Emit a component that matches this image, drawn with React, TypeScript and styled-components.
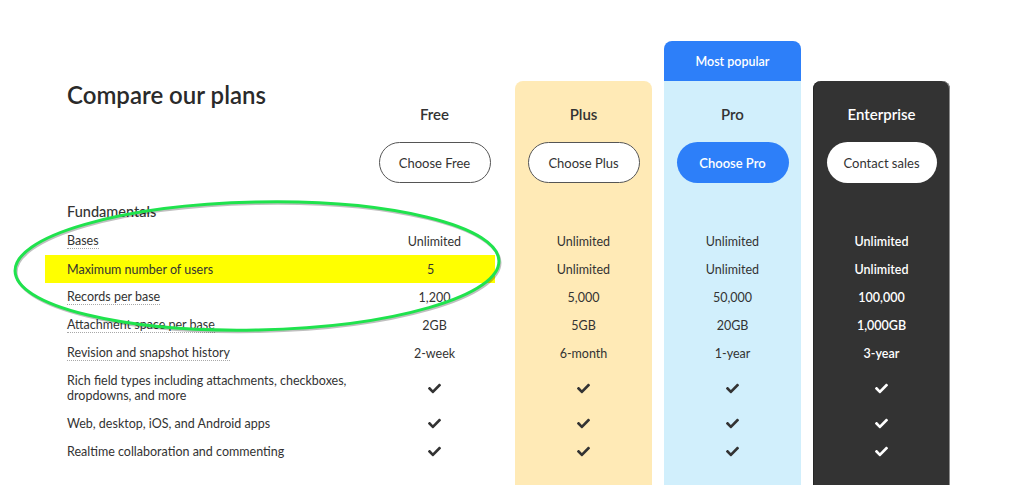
import React from 'react'
import styled, { createGlobalStyle, css } from 'styled-components'
import { FaCheck } from 'react-icons/fa'

type Variant = 'free' | 'plus' | 'pro' | 'enterprise'
type Value = string | boolean

interface Plan {
  name: string
  cta: string
  variant: Variant
  badge?: string
  values: Value[]
}

interface Feature {
  label: string
  tip?: boolean
  tall?: boolean
  highlight?: boolean
}

const features: Feature[] = [
  { label: 'Bases', tip: true },
  { label: 'Maximum number of users', highlight: true },
  { label: 'Records per base', tip: true },
  { label: 'Attachment space per base', tip: true },
  { label: 'Revision and snapshot history', tip: true },
  { label: 'Rich field types including attachments, checkboxes, dropdowns, and more', tall: true },
  { label: 'Web, desktop, iOS, and Android apps' },
  { label: 'Realtime collaboration and commenting' }
]

const plans: Plan[] = [
  {
    name: 'Free',
    cta: 'Choose Free',
    variant: 'free',
    values: ['Unlimited', '5', '1,200', '2GB', '2-week', true, true, true]
  },
  {
    name: 'Plus',
    cta: 'Choose Plus',
    variant: 'plus',
    values: ['Unlimited', 'Unlimited', '5,000', '5GB', '6-month', true, true, true]
  },
  {
    name: 'Pro',
    cta: 'Choose Pro',
    variant: 'pro',
    badge: 'Most popular',
    values: ['Unlimited', 'Unlimited', '50,000', '20GB', '1-year', true, true, true]
  },
  {
    name: 'Enterprise',
    cta: 'Contact sales',
    variant: 'enterprise',
    values: ['Unlimited', 'Unlimited', '100,000', '1,000GB', '3-year', true, true, true]
  }
]

const cardBg: Record<Variant, string> = {
  free: 'transparent',
  plus: '#ffeab6',
  pro: '#d1effc',
  enterprise: '#333333'
}

const GlobalStyle = createGlobalStyle`
  body {
    margin: 0;
    background: #ffffff;
    font-family: Lato, "Noto Sans", sans-serif;
    color: #333333;
  }
`

const Page = styled.div`
  position: relative;
  padding: 41px 0 0 67px;
`

const Table = styled.div`
  display: flex;
  align-items: flex-start;
`

const LabelColumn = styled.div`
  width: 299px;
  display: flex;
  flex-direction: column;
`

const PlanGrid = styled.div`
  display: flex;
  gap: 12px;
`

const PlanColumn = styled.div`
  width: 137px;
  display: flex;
  flex-direction: column;
`

const TabSlot = styled.div`
  height: 40px;
`

const Badge = styled.div`
  height: 40px;
  border-radius: 8px 8px 0 0;
  background: #2d7ff9;
  color: #ffffff;
  font-size: 12.5px;
  font-weight: 600;
  display: flex;
  align-items: center;
  justify-content: center;
`

const Card = styled.div<{ $variant: Variant; $square: boolean }>`
  background: ${p => cardBg[p.$variant]};
  border-radius: ${p => (p.$square ? '0' : '8px 8px 0 0')};
  color: ${p => (p.$variant === 'enterprise' ? '#ffffff' : '#333333')};
  padding-bottom: 40px;
  ${p =>
    p.$variant === 'enterprise' &&
    css`
      box-shadow: inset -1px 0 0 #8c8c8c, inset 1px 0 0 #262626;
    `}
`

const Header = styled.div`
  height: 103px;
  box-sizing: border-box;
  padding-top: 22px;
  display: flex;
  flex-direction: column;
  align-items: center;
`

const TitleHeader = styled.div`
  height: 103px;
`

const Title = styled.h1`
  margin: -1px 0 0;
  font-size: 24px;
  line-height: 30px;
  font-weight: 600;
  color: #2a2a2a;
`

const PlanName = styled.div`
  font-size: 15px;
  line-height: 22px;
  font-weight: 600;
  margin-bottom: 17px;
`

const CtaButton = styled.button<{ $variant: Variant }>`
  width: 112px;
  height: 41px;
  border-radius: 21px;
  font-family: inherit;
  font-size: 13px;
  cursor: pointer;
  ${p => {
    switch (p.$variant) {
      case 'pro':
        return css`
          background: #2d7ff9;
          color: #ffffff;
          border: none;
          font-weight: 600;
        `
      case 'enterprise':
        return css`
          background: #ffffff;
          color: #333333;
          border: none;
          width: 110px;
        `
      default:
        return css`
          background: #ffffff;
          color: #333333;
          border: 1px solid #555555;
        `
    }
  }}
`

const SectionRow = styled.div`
  height: 43px;
  box-sizing: border-box;
  padding-top: 18px;
  font-size: 14.5px;
  line-height: 20px;
  font-weight: 500;
`

const SectionSpacer = styled.div`
  height: 43px;
`

const Row = styled.div<{ $tall?: boolean; $highlight?: boolean }>`
  height: ${p => (p.$tall ? '42px' : '28px')};
  box-sizing: border-box;
  display: flex;
  align-items: center;
  font-size: 12.5px;
  line-height: 15px;
  ${p =>
    p.$highlight &&
    css`
      background: #ffff00;
    `}
`

const LabelRow = styled(Row)`
  margin-left: -22px;
  padding-left: 22px;
`

const ValueRow = styled(Row)<{ $strong?: boolean }>`
  justify-content: center;
  font-weight: ${p => (p.$strong ? 600 : 400)};
  ${p =>
    p.$highlight &&
    css`
      margin-right: 8px;
    `}
`

const Label = styled.span<{ $tip?: boolean }>`
  ${p =>
    p.$tip &&
    css`
      border-bottom: 1px dotted #a8a8a8;
    `}
`

const Annotation = styled.svg`
  position: absolute;
  left: 0;
  top: 0;
  pointer-events: none;
`

function PlanCol({ plan }: { plan: Plan }) {
  const strong = plan.variant === 'enterprise'
  return (
    <PlanColumn>
      {plan.badge ? <Badge>{plan.badge}</Badge> : <TabSlot />}
      <Card $variant={plan.variant} $square={!!plan.badge}>
        <Header>
          <PlanName>{plan.name}</PlanName>
          <CtaButton $variant={plan.variant}>{plan.cta}</CtaButton>
        </Header>
        <SectionSpacer />
        {features.map((f, i) => {
          const v = plan.values[i]
          const hl = f.highlight && plan.variant === 'free'
          return (
            <ValueRow key={f.label} $tall={f.tall} $highlight={hl} $strong={strong}>
              {v === true ? <FaCheck size={13} /> : v}
            </ValueRow>
          )
        })}
      </Card>
    </PlanColumn>
  )
}

export default function App() {
  return (
    <>
      <GlobalStyle />
      <Page>
        <Table>
          <LabelColumn>
            <TabSlot />
            <TitleHeader>
              <Title>Compare our plans</Title>
            </TitleHeader>
            <SectionRow>Fundamentals</SectionRow>
            {features.map(f => (
              <LabelRow key={f.label} $tall={f.tall} $highlight={f.highlight}>
                <Label $tip={f.tip}>{f.label}</Label>
              </LabelRow>
            ))}
          </LabelColumn>
          <PlanGrid>
            {plans.map(p => (
              <PlanCol key={p.name} plan={p} />
            ))}
          </PlanGrid>
        </Table>
        <Annotation width={1024} height={485} viewBox="0 0 1024 485">
          <g transform="rotate(-1.2 257 266)">
            <ellipse cx={258} cy={267.5} rx={242} ry={64} fill="none" stroke="rgba(0,0,0,0.25)" strokeWidth={3} />
            <ellipse cx={257} cy={266} rx={242} ry={64} fill="none" stroke="#1fe34d" strokeWidth={3} />
          </g>
        </Annotation>
      </Page>
    </>
  )
}
